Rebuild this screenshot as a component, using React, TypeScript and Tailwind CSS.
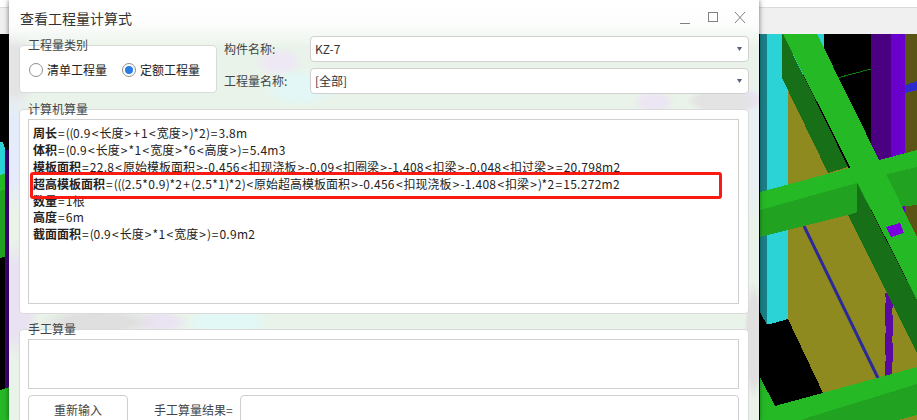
import React from "react";

const lines: [string, string][] = [
  ["周长", "=((0.9<长度>+1<宽度>)*2)=3.8m"],
  ["体积", "=(0.9<长度>*1<宽度>*6<高度>)=5.4m3"],
  ["模板面积", "=22.8<原始模板面积>-0.456<扣现浇板>-0.09<扣圈梁>-1.408<扣梁>-0.048<扣过梁>=20.798m2"],
  ["超高模板面积", "=(((2.5*0.9)*2+(2.5*1)*2)<原始超高模板面积>-0.456<扣现浇板>-1.408<扣梁>)*2=15.272m2"],
  ["数量", "=1根"],
  ["高度", "=6m"],
  ["截面面积", "=(0.9<长度>*1<宽度>)=0.9m2"],
];

// the symbols sit wider in the original font, parens narrower
function Formula({ text }: { text: string }) {
  const parts = text.split(/([<>=+])|([()]+)|([0-9.m*-]+)/).filter(Boolean);
  return (
    <>
      {parts.map((p, i) =>
        /^[<>=+]$/.test(p) ? (
          <span key={i} className="mx-[1.05px]">{p}</span>
        ) : /^[()]+$/.test(p) ? (
          <span key={i} className="tracking-[-0.4px]">{p}</span>
        ) : /^[0-9.m*-]+$/.test(p) ? (
          <span key={i} className="tracking-[0.3px]">{p}</span>
        ) : (
          <span key={i}>{p}</span>
        )
      )}
    </>
  );
}

function Scene() {
  return (
    <svg viewBox="0 34 917 386" className="block w-[917px] h-[386px]" shapeRendering="crispEdges">
      <rect x="0" y="34" width="917" height="386" fill="#000" />
      {/* left edge, mostly behind the dialog */}
      <polygon points="0,142 3,142 9,160 9,172 0,175" fill="#2bd2d6" />
      <polygon points="0,175 9,172 9,255 0,258" fill="#21a321" />
      <polygon points="0,175 9,172 9,188 0,191" fill="#26b926" />
      <rect x="5" y="150" width="4" height="245" fill="#3d007a" />
      <polygon points="0,390 9,387 9,420 0,420" fill="#26b926" />
      {/* columns */}
      <rect x="760" y="34" width="7" height="290" fill="#1a8088" />
      <rect x="767" y="34" width="21" height="290" fill="#2bd2d6" />
      <rect x="788" y="34" width="36" height="40" fill="#2bd2d6" />
      <polygon points="760,312 767,325 788,319 823,393 775,406 760,376" fill="#000" />
      <polygon points="788,90 848,167 917,300 917,368 823,393 788,319" fill="#8f8a1f" />
      <rect x="871" y="34" width="20" height="130" fill="#4b0082" />
      <rect x="891" y="34" width="14" height="130" fill="#6a00cc" />
      <rect x="905" y="34" width="12" height="210" fill="#5a5415" />
      <rect x="891" y="160" width="14" height="55" fill="#6a00cc" />
      <polygon points="905,85 917,81 917,90 905,93" fill="#2b2bd0" />
      <line x1="837" y1="78" x2="871" y2="69" stroke="#0e7a0e" strokeWidth="1" />
      {/* blue rebar + dashed purple */}
      <line x1="804" y1="226" x2="878" y2="378" stroke="#2a2a9a" strokeWidth="3" shapeRendering="auto" />
      <polygon
        points="885,293 892,293 893,305 892,312 893,318 893,333 892,340 893,345 893,360 892,365 892,375 885,377 885,364 886,358 885,352 885,336 886,330 885,322 885,306 886,300"
        fill="#5a0aa0"
      />
      {/* cross beam */}
      <polygon points="760,192 917,150 917,167 883,175 857,183 760,210" fill="#26b926" />
      <polygon points="760,210 857,183 883,175 917,167 917,205 870,210 848,215 760,237" fill="#21a321" />
      {/* diagonal beam */}
      <polygon points="782,34 782,78 828,173 848,167 783,34" fill="#176f17" />
      <polygon points="857,183 917,300 917,353 848,215 857,212" fill="#176f17" />
      <polygon points="783,34 817,34 917,237 917,300" fill="#26b926" />
      <polygon points="886,227 900,223 904,233 891,237" fill="#7a00e0" />
      {/* lower beam */}
      <polygon points="760,377 775,406 917,367 917,384 800,420 760,420" fill="#26b926" />
      <polygon points="800,420 917,384 917,420" fill="#21a321" />
      <polygon points="898,420 917,415 917,420" fill="#8f8a1f" />
    </svg>
  );
}

function Radio({ label, checked }: { label: string; checked?: boolean }) {
  return (
    <div className="flex items-center gap-[4px]">
      <span className="w-[14px] h-[14px] rounded-full border border-[#8f8f8f] bg-white flex items-center justify-center">
        {checked && <span className="w-[8px] h-[8px] rounded-full bg-[#2a7de1]" />}
      </span>
      <span className="text-[12px] text-[#222]">{label}</span>
    </div>
  );
}

function Select({ value }: { value: string }) {
  return (
    <div className="flex-1 h-[26px] bg-white border border-[#d0d0d0] rounded-[4px] flex items-center justify-between pl-[4px] pr-[6px]">
      <span className="text-[12px] text-[#333]">{value}</span>
      <svg width="5" height="4" viewBox="0 0 5 4">
        <polygon points="0,0 5,0 2.5,4" fill="#55607a" />
      </svg>
    </div>
  );
}

function Group({ title, className, children }: { title: string; className: string; children: React.ReactNode }) {
  return (
    <div className={`relative bg-white border border-[#dadada] rounded-[4px] ${className}`}>
      <span className="absolute left-[8px] -top-[9px] text-[12px] leading-[16px] text-[#444]">{title}</span>
      {children}
    </div>
  );
}

export default function App() {
  return (
    <div className="relative w-[917px] h-[420px] overflow-hidden bg-white font-['Noto_Sans_CJK_SC',sans-serif]">
      <div className="h-[8px] bg-white border-b border-[#d9d9d9]" />
      <div className="h-[26px] bg-[#f0f0f0]" />
      <Scene />

      {/* dialog window */}
      <div className="absolute left-[9px] top-0 w-[750px] h-[420px] overflow-hidden shadow-[0_0_5px_rgba(0,0,0,0.55)] bg-[linear-gradient(180deg,#ffffff_0,#fdfdfd_24px,rgba(250,250,250,0)_48px),radial-gradient(ellipse_26px_60px_at_5px_300px,#e9e2f2_60%,transparent),radial-gradient(ellipse_24px_60px_at_5px_150px,#e4ebfa_50%,transparent),radial-gradient(ellipse_24px_40px_at_5px_70px,#e4e4e4_60%,transparent),radial-gradient(ellipse_60px_14px_at_90px_322px,#dfdfdf_55%,transparent),radial-gradient(ellipse_30px_12px_at_150px_322px,#eae3f2_50%,transparent),radial-gradient(ellipse_45px_14px_at_218px_322px,#e2f8f7_60%,transparent),radial-gradient(ellipse_35px_12px_at_712px_101px,#e3e3e3_70%,transparent),radial-gradient(ellipse_22px_12px_at_645px_102px,#ece5f3_50%,transparent),radial-gradient(ellipse_22px_12px_at_735px_100px,#e8e3f0_60%,transparent),radial-gradient(ellipse_10px_60px_at_745px_340px,#e0e0e0_70%,transparent),radial-gradient(ellipse_10px_70px_at_745px_150px,#e8f0f3_70%,transparent),radial-gradient(ellipse_40px_20px_at_290px_88px,#e2f7f6_50%,transparent),radial-gradient(ellipse_25px_15px_at_270px_62px,#eee8f5_50%,transparent),linear-gradient(#e9f3e9,#e9f3e9)]">
        <div className="flex h-[36px] items-center justify-between pl-[11px] pr-[13px]">
          <span className="text-[14px] text-[#333]">查看工程量计算式</span>
          <svg width="66" height="14" viewBox="0 0 66 14" fill="none" stroke="#808080" strokeWidth="1">
            <path d="M0 12.5h10" />
            <rect x="28.5" y="1.5" width="9" height="9" />
            <path d="M55 1l10 11M65 1 55 12" />
          </svg>
        </div>

        <div className="px-[10px]">
          <div className="flex">
            <Group title="工程量类别" className="w-[198px] h-[48px] mt-[9px] shrink-0">
              <div className="flex items-center gap-[15px] pl-[9px] h-full pt-[1px]">
                <Radio label="清单工程量" />
                <Radio label="定额工程量" checked />
              </div>
            </Group>
            <div className="flex-1 flex flex-col gap-[6px] pl-[7px]">
              <div className="flex items-center">
                <span className="w-[86px] text-[12px] text-[#444]">构件名称:</span>
                <Select value="KZ-7" />
              </div>
              <div className="flex items-center">
                <span className="w-[86px] text-[12px] text-[#444]">工程量名称:</span>
                <Select value="[全部]" />
              </div>
            </div>
          </div>

          <Group title="计算机算量" className="h-[205px] mt-[15px] pl-[8px] pr-[9px] py-[9px]">
            <div className="relative h-[185px] border border-[#cfcfcf] pl-[4px] pt-[5px]">
              {lines.map(([name, rest]) => (
                <div key={name} className="h-[16.9px] leading-[16.9px] text-[12px] text-[#222] whitespace-nowrap">
                  <span className="font-bold">{name}</span>
                  <Formula text={rest} />
                </div>
              ))}
              <div className="absolute left-[1px] top-[52px] w-[692px] h-[27px] border-[3px] border-[#fb1a12] rounded-[3px]" />
            </div>
          </Group>

          <Group title="手工算量" className="h-[110px] mt-[15px] pl-[8px] pr-[9px] py-[9px]">
            <div className="h-[50px] border border-[#cfcfcf]" />
            <div className="flex mt-[6px] items-start">
              <div className="w-[100px] h-[30px] border border-[#cfcfcf] rounded-[4px] flex items-center justify-center text-[12px] text-[#444]">
                重新输入
              </div>
              <span className="ml-[26px] w-[86px] h-[30px] leading-[30px] text-[12px] text-[#444]">手工算量结果=</span>
              <div className="flex-1 h-[30px] border border-[#cfcfcf] rounded-[4px]" />
            </div>
          </Group>
        </div>
      </div>
    </div>
  );
}
